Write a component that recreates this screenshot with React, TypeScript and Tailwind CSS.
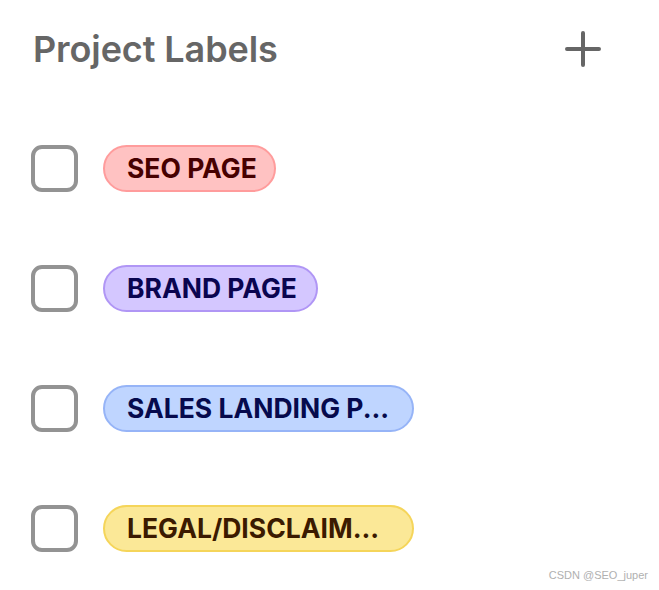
import React from "react";

const labels = [
  { text: "SEO PAGE", bg: "bg-[#ffc2c2]", border: "border-[#ff9c9c]", color: "text-[#470000]", w: "w-[173px]" },
  { text: "BRAND PAGE", bg: "bg-[#d4c7ff]", border: "border-[#b096f5]", color: "text-[#0a0550]", w: "w-[215px]" },
  { text: "SALES LANDING P...", bg: "bg-[#bfd5ff]", border: "border-[#96b4f7]", color: "text-[#060a4d]", w: "w-[311px]" },
  { text: "LEGAL/DISCLAIM...", bg: "bg-[#fbe897]", border: "border-[#f5d55a]", color: "text-[#3b1a00]", w: "w-[311px]" },
];

export default function App() {
  return (
    <div className="relative w-[659px] h-[590px] bg-white" style={{ fontFamily: "Inter, 'Noto Sans', sans-serif" }}>
      <div className="flex items-center justify-between pl-[33px] pr-[58px] pt-[25px]">
        <h1 className="text-[36px] leading-[48px] font-semibold text-[#666666] tracking-[-0.1px]">Project Labels</h1>
        <svg width="36" height="36" viewBox="0 0 36 36" className="mt-[0px]">
          <path d="M18 2V34M2 18H34" stroke="#666666" strokeWidth="4" strokeLinecap="round" />
        </svg>
      </div>
      <div className="flex flex-col gap-[73px] pl-[31px] pt-[72px]">
        {labels.map((l) => (
          <div key={l.text} className="flex items-center gap-[25px]">
            <div className="w-[47px] h-[47px] rounded-[11px] border-[4px] border-[#939393] bg-white" />
            <div className={`h-[47px] ${l.w} rounded-full border-2 ${l.bg} ${l.border} ${l.color} flex items-center pl-[22px] text-[26.5px] font-bold tracking-[0px]`}>
              {l.text}
            </div>
          </div>
        ))}
      </div>
      <div className="absolute right-[11px] bottom-[7px] text-[11px] text-[#b0b0b0]" style={{ fontFamily: "'Liberation Sans', sans-serif" }}>
        CSDN @SEO_juper
      </div>
    </div>
  );
}
